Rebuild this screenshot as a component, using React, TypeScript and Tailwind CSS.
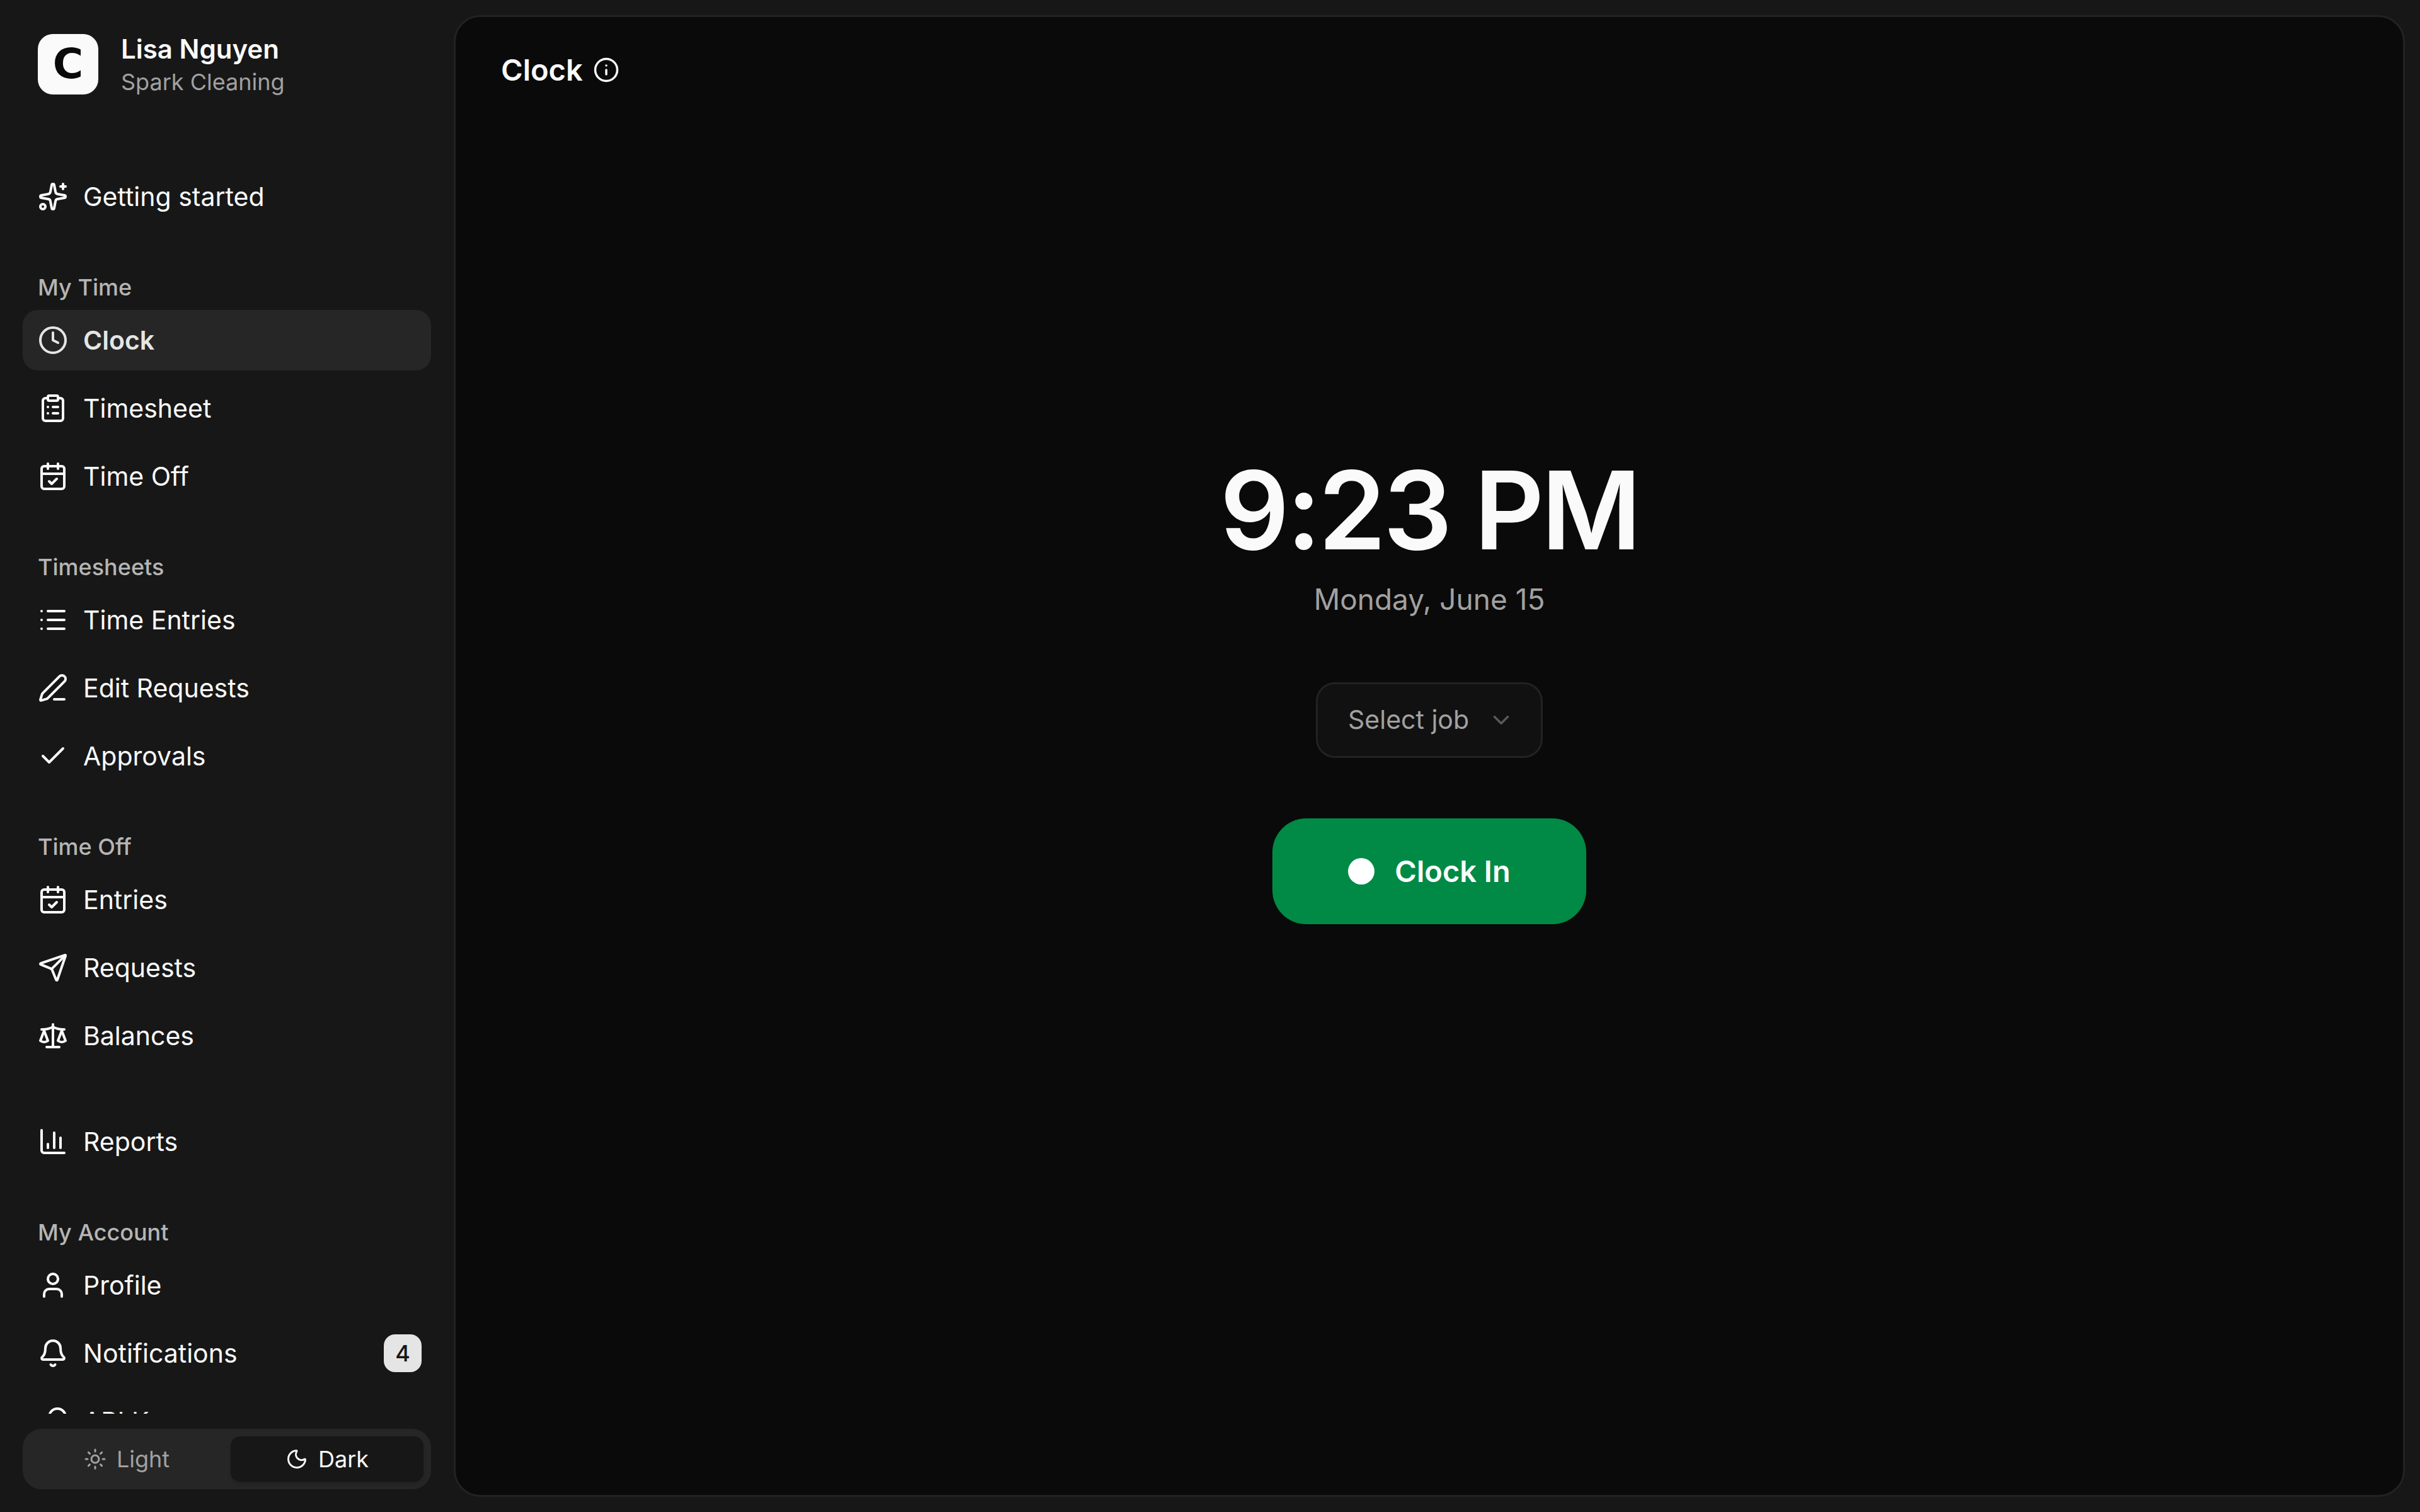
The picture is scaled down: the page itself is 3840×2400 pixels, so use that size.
import React, { useState } from 'react';
import {
  Bell,
  CalendarCheck,
  ChartColumn,
  Check,
  ChevronDown,
  ClipboardList,
  Clock,
  Info,
  KeyRound,
  List,
  LucideIcon,
  Moon,
  PenLine,
  Scale,
  Send,
  Sparkles,
  Sun,
  User,
} from 'lucide-react';
import clsx from 'clsx';

interface NavItem {
  label: string;
  icon: LucideIcon;
  href: string;
  active?: boolean;
  badge?: number;
}

interface NavGroup {
  title?: string;
  items: NavItem[];
}

const groups: NavGroup[] = [
  {
    items: [{ label: 'Getting started', icon: Sparkles, href: '#getting-started' }],
  },
  {
    title: 'My Time',
    items: [
      { label: 'Clock', icon: Clock, href: '#clock', active: true },
      { label: 'Timesheet', icon: ClipboardList, href: '#timesheet' },
      { label: 'Time Off', icon: CalendarCheck, href: '#time-off' },
    ],
  },
  {
    title: 'Timesheets',
    items: [
      { label: 'Time Entries', icon: List, href: '#time-entries' },
      { label: 'Edit Requests', icon: PenLine, href: '#edit-requests' },
      { label: 'Approvals', icon: Check, href: '#approvals' },
    ],
  },
  {
    title: 'Time Off',
    items: [
      { label: 'Entries', icon: CalendarCheck, href: '#entries' },
      { label: 'Requests', icon: Send, href: '#requests' },
      { label: 'Balances', icon: Scale, href: '#balances' },
    ],
  },
  {
    items: [{ label: 'Reports', icon: ChartColumn, href: '#reports' }],
  },
  {
    title: 'My Account',
    items: [
      { label: 'Profile', icon: User, href: '#profile' },
      { label: 'Notifications', icon: Bell, href: '#notifications', badge: 4 },
      { label: 'API Keys', icon: KeyRound, href: '#api-keys' },
    ],
  },
];

const NavLink: React.FC<{ item: NavItem }> = ({ item }) => {
  const Icon = item.icon;
  return (
    <a
      href={item.href}
      aria-current={item.active ? 'page' : undefined}
      className={clsx(
        'flex h-24 items-center gap-6 rounded-3xl pl-6 pr-[15px] text-[41px] leading-[60px]',
        item.active ? 'bg-[#262626] font-semibold text-neutral-200' : 'text-neutral-50'
      )}
    >
      <Icon className="size-12 shrink-0" />
      <span className="flex-1 truncate">{item.label}</span>
      {item.badge !== undefined && (
        <span className="flex size-15 items-center justify-center rounded-[18px] bg-neutral-200 text-[36px] font-medium text-neutral-900">
          {item.badge}
        </span>
      )}
    </a>
  );
};

const Sidebar: React.FC = () => {
  const [theme, setTheme] = useState<'light' | 'dark'>('dark');

  const themeButton = (active: boolean) =>
    clsx(
      'flex h-18 flex-1 items-center justify-center gap-4 rounded-[15px] text-[36px]',
      active ? 'bg-neutral-900 text-neutral-50 shadow-md' : 'text-neutral-400'
    );

  return (
    <aside className="flex w-[720px] shrink-0 flex-col px-9 pb-9">
      <div className="flex shrink-0 items-start gap-9 px-6 pt-[54px] pb-[98px]">
        <div className="flex size-24 items-center justify-center rounded-3xl bg-neutral-50 font-['DejaVu_Sans',sans-serif] text-[66px] font-bold leading-none text-neutral-950">
          C
        </div>
        <div className="flex flex-col gap-1">
          <div className="text-[42px] font-semibold leading-[48px] text-neutral-50">Lisa Nguyen</div>
          <div className="text-[36px] leading-[48px] text-neutral-400">Spark Cleaning</div>
        </div>
      </div>

      <nav className="flex min-h-0 flex-1 flex-col gap-[60px] overflow-hidden">
        {groups.map((group, i) => (
          <div key={i} className={clsx('shrink-0', !group.title && 'pt-3')}>
            {group.title && (
              <h2 className="flex h-18 items-center px-6 text-[36px] font-medium leading-[48px] text-[#b5b5b5]">
                {group.title}
              </h2>
            )}
            <ul className="flex flex-col gap-3">
              {group.items.map((item) => (
                <li key={item.label}>
                  <NavLink item={item} />
                </li>
              ))}
            </ul>
          </div>
        ))}
      </nav>

      <div className="mt-6 flex shrink-0 gap-3 rounded-[30px] bg-[#262626] p-3">
        <button type="button" className={themeButton(theme === 'light')} onClick={() => setTheme('light')}>
          <Sun className="size-9" />
          Light
        </button>
        <button type="button" className={themeButton(theme === 'dark')} onClick={() => setTheme('dark')}>
          <Moon className="size-9" />
          Dark
        </button>
      </div>
    </aside>
  );
};

const ClockPanel: React.FC = () => {
  return (
    <main className="my-6 mr-6 flex min-w-0 flex-1 flex-col rounded-[42px] border-3 border-[#222222] bg-neutral-950">
      <header className="flex h-[168px] shrink-0 items-center gap-4 px-18">
        <h1 className="text-[47px] font-semibold text-neutral-50">Clock</h1>
        <button type="button" aria-label="About the clock" className="text-neutral-50">
          <Info className="size-[42px]" />
        </button>
      </header>

      <div className="flex flex-1 flex-col items-center justify-center pb-[382px]">
        <div className="text-[172px] font-semibold leading-[180px] tracking-tight text-neutral-50">9:23 PM</div>
        <div className="mt-4 text-[46px] leading-[72px] text-neutral-400">Monday, June 15</div>

        <div className="mt-24 grid items-center">
          <select
            aria-label="Select job"
            defaultValue=""
            className="col-start-1 row-start-1 h-[120px] w-[360px] appearance-none rounded-[30px] border-3 border-[#222222] bg-[#111111] pl-12 text-[41px] text-neutral-400"
          >
            <option value="">Select job</option>
          </select>
          <ChevronDown className="pointer-events-none col-start-1 row-start-1 mr-[45px] size-[42px] justify-self-end text-neutral-400 opacity-50" />
        </div>

        <button
          type="button"
          className="mt-24 flex h-[168px] items-center gap-8 rounded-[54px] bg-[#008a45] px-30 text-[47px] font-semibold text-white"
        >
          <span className="size-[42px] rounded-full bg-white" />
          Clock In
        </button>
      </div>
    </main>
  );
};

export default function App() {
  return (
    <div className="flex h-screen bg-neutral-900 font-['Inter',sans-serif]">
      <Sidebar />
      <ClockPanel />
    </div>
  );
}
